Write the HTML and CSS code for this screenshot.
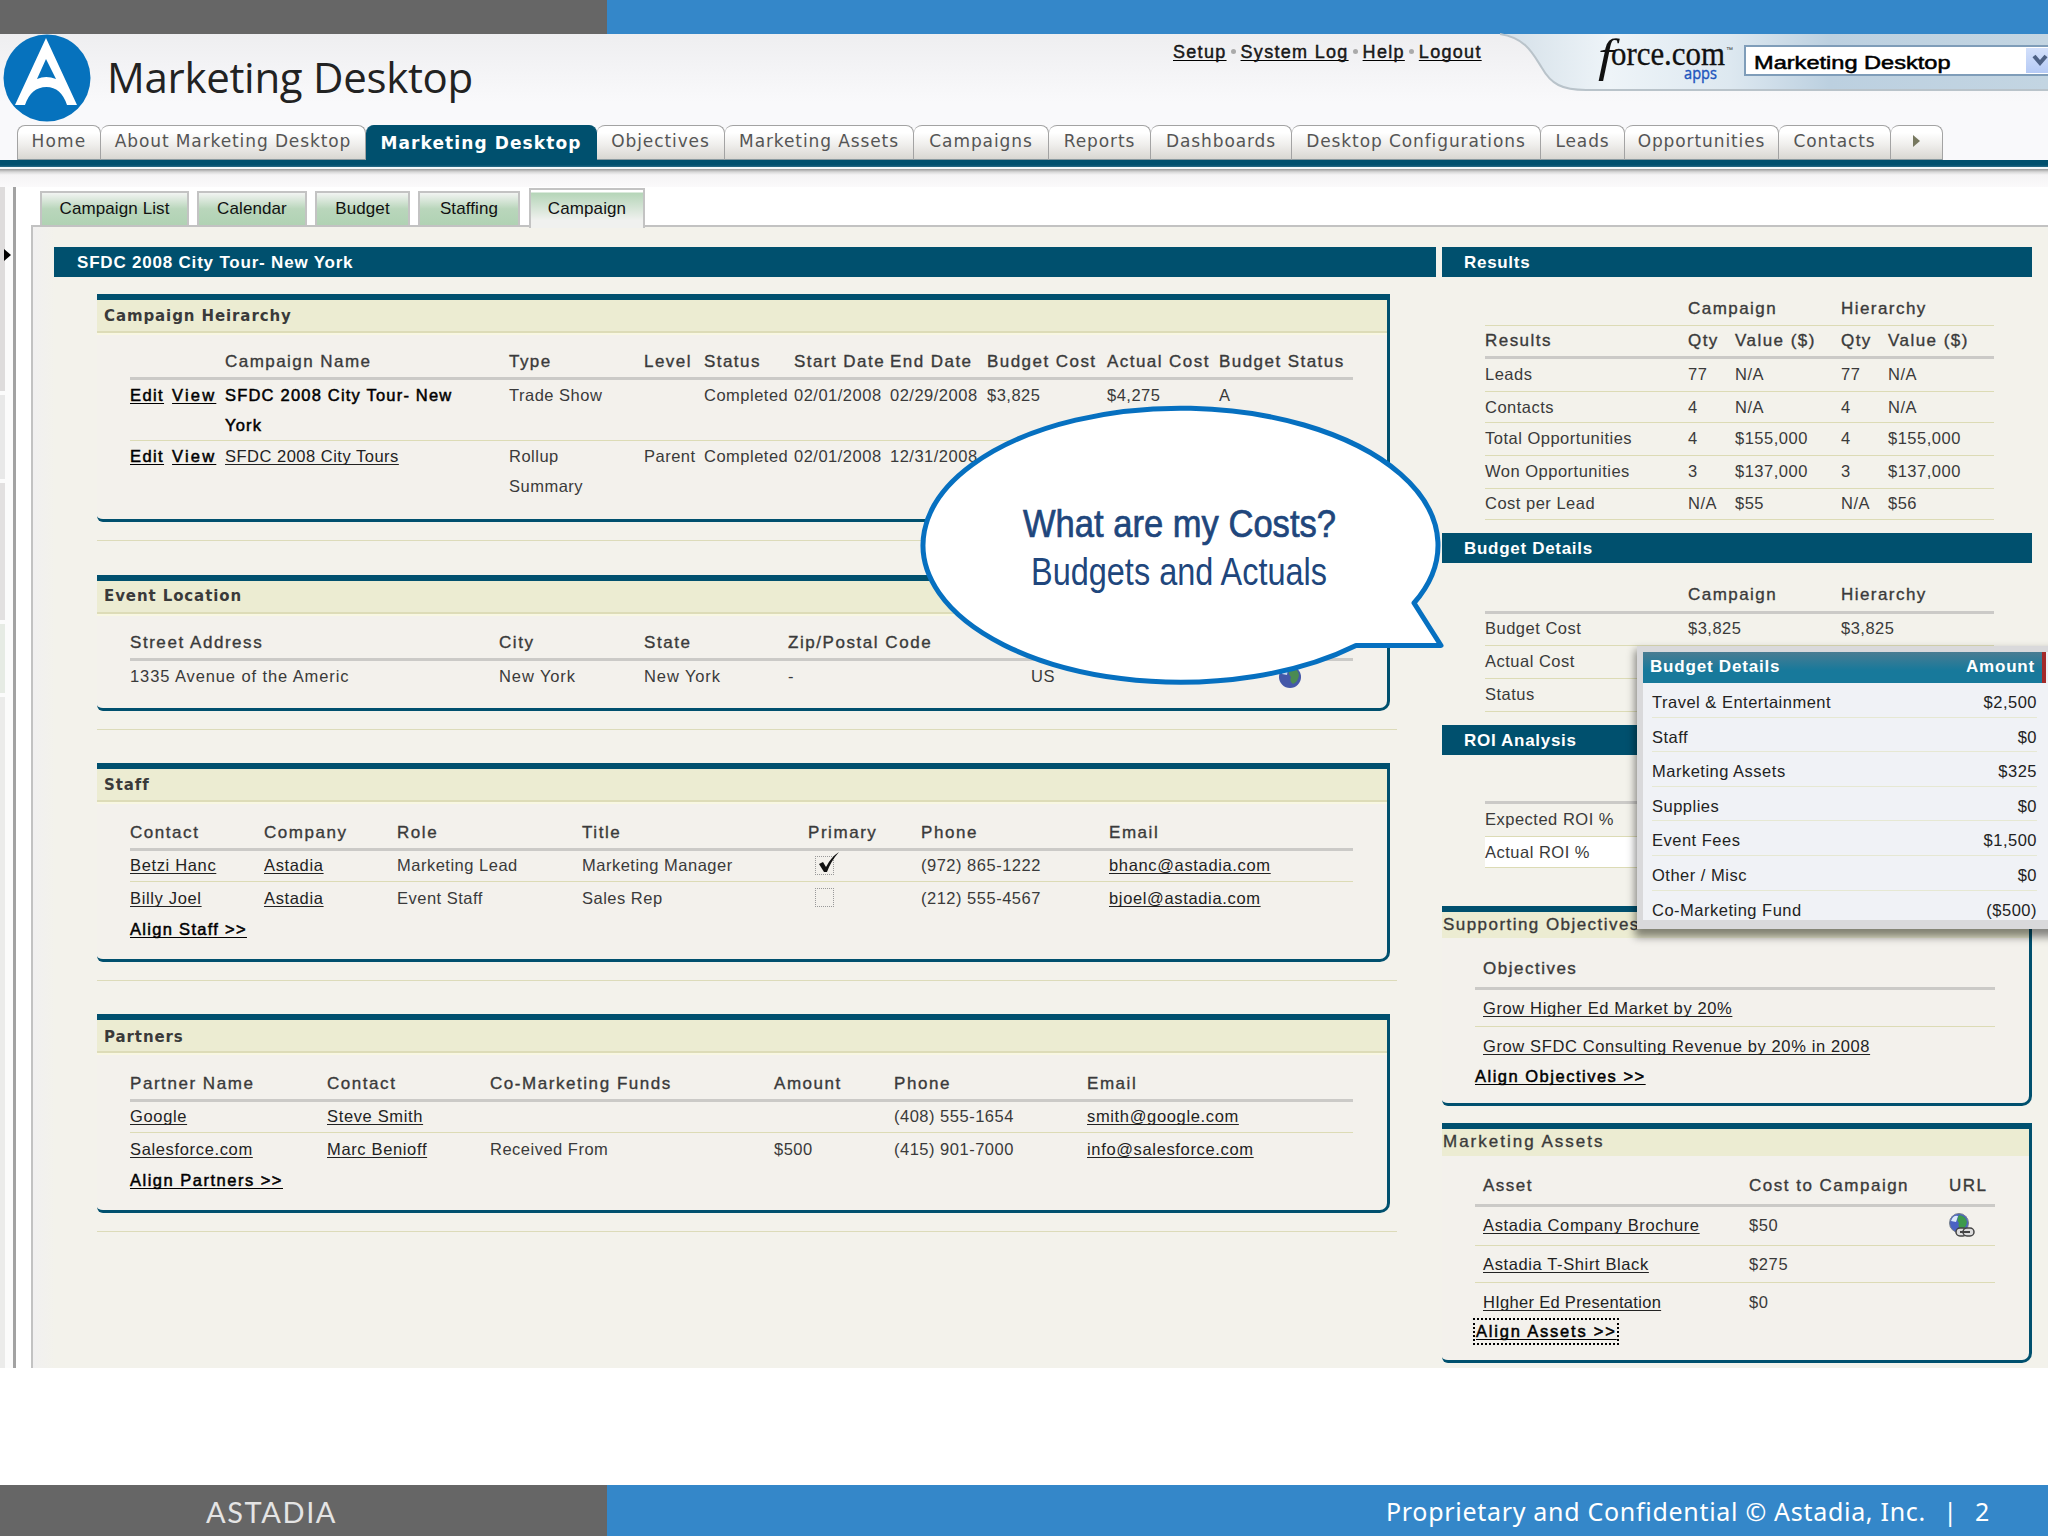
FILE: index.html
```
<!DOCTYPE html>
<html lang="en">
<head>
  <meta charset="UTF-8">
  <meta name="viewport" content="width=device-width, initial-scale=1.0">
  <title>Marketing Desktop</title>
  <link rel="stylesheet" href="styles.css">
</head>
<body>
  <div id="slide">
    <div class="strip top-strip"><div class="strip-gray"></div></div>

    <div id="app">
      <header class="header">
        <svg class="logo" width="88" height="88" viewBox="0 0 88 88">
          <ellipse cx="44" cy="44" rx="43.5" ry="43.5" fill="#0672bd"/>
          <path d="M43 4 L74 71 L64 71 Q58 53 43.5 53 Q28 53 22 71 L12 71 Z M43 25 L34 45 Q43 41 53 45 Z" fill="#fff" fill-rule="evenodd"/>
        </svg>
        <h1 class="app-title">Marketing Desktop</h1>
        <nav class="links">
          <a>Setup</a><i></i><a>System Log</a><i></i><a>Help</a><i></i><a>Logout</a>
        </nav>
        <svg class="force" width="548" height="60" viewBox="0 0 548 60">
          <defs>
            <linearGradient id="sky" x1="0" y1="0" x2="1" y2="0">
              <stop offset="0" stop-color="#d3dfe8"/>
              <stop offset=".2" stop-color="#eef4f8"/>
              <stop offset=".42" stop-color="#dde8f0"/>
              <stop offset=".6" stop-color="#bcd0e0"/>
              <stop offset="1" stop-color="#c3d5e2"/>
            </linearGradient>
          </defs>
          <path d="M0 0 C26 4 33 20 42 34 C51 50 62 56 86 56 L548 56 L548 0 Z" fill="url(#sky)"/>
          <path d="M0 0 C26 4 33 20 42 34 C51 50 62 56 86 56 L548 56" fill="none" stroke="#b9c3ca" stroke-width="2"/>
          <text class="force-f" x="98" y="36.5" textLength="15.4" lengthAdjust="spacingAndGlyphs">f</text>
          <text class="force-text" x="111" y="30.5" textLength="114" lengthAdjust="spacingAndGlyphs">orce.com</text>
          <text class="force-tm" x="226" y="18">™</text>
          <text class="force-apps" x="184" y="45" textLength="33" lengthAdjust="spacingAndGlyphs">apps</text>
        </svg>
        <div class="select">
          <span>Marketing Desktop</span>
          <div class="select-btn"><svg width="24" height="24" viewBox="0 0 24 24"><path d="M8 8 L14 15 L20 8" fill="none" stroke="#4d6185" stroke-width="4"/></svg></div>
        </div>
      </header>

      <ul class="tabs">
        <li class="t-home">Home</li>
        <li class="t-about">About Marketing Desktop</li>
        <li class="t-desk active">Marketing Desktop</li>
        <li class="t-obj">Objectives</li>
        <li class="t-assets">Marketing Assets</li>
        <li class="t-camp">Campaigns</li>
        <li class="t-rep">Reports</li>
        <li class="t-dash">Dashboards</li>
        <li class="t-conf">Desktop Configurations</li>
        <li class="t-leads">Leads</li>
        <li class="t-opp">Opportunities</li>
        <li class="t-cont">Contacts</li>
        <li class="t-more"><b></b></li>
      </ul>
      <div class="tab-line"></div>

      <div class="workspace">
        <aside class="sidebar">
          <div class="seg seg1"><b></b></div>
          <div class="seg seg2"></div>
          <div class="seg seg3"></div>
          <div class="seg seg4"></div>
          <div class="seg seg5"></div>
        </aside>
        <div class="content">
          <ul class="subtabs">
            <li class="s-list">Campaign List</li>
            <li class="s-cal">Calendar</li>
            <li class="s-bud">Budget</li>
            <li class="s-staff">Staffing</li>
            <li class="s-camp current">Campaign</li>
          </ul>

          <main class="panel">
            <div class="left">
              <h2 class="bar">SFDC 2008 City Tour- New York</h2>

              <div class="block">
                <section class="box hierarchy">
                  <h3>Campaign Heirarchy</h3>
                  <div class="row head"><div></div><div>Campaign Name</div><div>Type</div><div>Level</div><div>Status</div><div>Start Date</div><div>End Date</div><div>Budget Cost</div><div>Actual Cost</div><div>Budget Status</div></div>
                  <div class="row two"><div class="acts"><a>Edit</a><a>View</a></div><div class="strong">SFDC 2008 City Tour- New York</div><div>Trade Show</div><div></div><div>Completed</div><div>02/01/2008</div><div>02/29/2008</div><div>$3,825</div><div>$4,275</div><div>A</div></div>
                  <div class="row two last"><div class="acts"><a>Edit</a><a>View</a></div><div><a>SFDC 2008 City Tours</a></div><div>Rollup<br>Summary</div><div>Parent</div><div>Completed</div><div>02/01/2008</div><div>12/31/2008</div><div></div><div></div><div></div></div>
                </section>
              </div>

              <div class="block">
                <section class="box location">
                  <h3>Event Location</h3>
                  <div class="row head"><div>Street Address</div><div>City</div><div>State</div><div>Zip/Postal Code</div><div></div><div></div></div>
                  <div class="row last"><div class="wide">1335 Avenue of the Americ</div><div class="wide">New York</div><div class="wide">New York</div><div>-</div><div>US</div>
                    <div><svg class="globe" width="26" height="26" viewBox="0 0 26 26"><circle cx="12" cy="12" r="11" fill="#4458a8"/><path d="M12 3 Q20 3 21 10 Q20 17 15 19 Q11 16 13 12 Q9 9 12 3Z" fill="#4b8a52"/><path d="M4 9 Q6 4 10 4 L9 10 Z" fill="#c5d6ee"/></svg></div></div>
                </section>
              </div>

              <div class="block">
                <section class="box staff">
                  <h3>Staff</h3>
                  <div class="row head"><div>Contact</div><div>Company</div><div>Role</div><div>Title</div><div>Primary</div><div>Phone</div><div>Email</div></div>
                  <div class="row"><div><a>Betzi Hanc</a></div><div><a>Astadia</a></div><div>Marketing Lead</div><div>Marketing Manager</div>
                    <div><span class="check"><svg width="24" height="24" viewBox="0 0 24 24"><path d="M2 12 L6 10 L9 15 Q14 5 22 0 Q14 9 10 20 L7 20 Z" fill="#111"/></svg></span></div><div>(972) 865-1222</div><div><a>bhanc@astadia.com</a></div></div>
                  <div class="row last"><div><a>Billy Joel</a></div><div><a>Astadia</a></div><div>Event Staff</div><div>Sales Rep</div><div><span class="check"></span></div><div>(212) 555-4567</div><div><a>bjoel@astadia.com</a></div></div>
                  <a class="align">Align Staff &gt;&gt;</a>
                </section>
              </div>

              <div class="block">
                <section class="box partners">
                  <h3>Partners</h3>
                  <div class="row head"><div>Partner Name</div><div>Contact</div><div>Co-Marketing Funds</div><div>Amount</div><div>Phone</div><div>Email</div></div>
                  <div class="row"><div><a>Google</a></div><div><a>Steve Smith</a></div><div></div><div></div><div>(408) 555-1654</div><div><a>smith@google.com</a></div></div>
                  <div class="row last"><div><a>Salesforce.com</a></div><div><a>Marc Benioff</a></div><div>Received From</div><div>$500</div><div>(415) 901-7000</div><div><a>info@salesforce.com</a></div></div>
                  <a class="align">Align Partners &gt;&gt;</a>
                </section>
              </div>
            </div>

            <div class="right">
              <h2 class="bar">Results</h2>
              <div class="sheet results">
                <div class="row head top"><div></div><div>Campaign</div><div></div><div>Hierarchy</div><div></div></div>
                <div class="row head"><div>Results</div><div>Qty</div><div>Value ($)</div><div>Qty</div><div>Value ($)</div></div>
                <div class="row"><div>Leads</div><div>77</div><div>N/A</div><div>77</div><div>N/A</div></div>
                <div class="row short"><div>Contacts</div><div>4</div><div>N/A</div><div>4</div><div>N/A</div></div>
                <div class="row"><div>Total Opportunities</div><div>4</div><div>$155,000</div><div>4</div><div>$155,000</div></div>
                <div class="row"><div>Won Opportunities</div><div>3</div><div>$137,000</div><div>3</div><div>$137,000</div></div>
                <div class="row short"><div>Cost per Lead</div><div>N/A</div><div>$55</div><div>N/A</div><div>$56</div></div>
              </div>

              <h2 class="bar">Budget Details</h2>
              <div class="sheet budget">
                <div class="row head"><div></div><div>Campaign</div><div>Hierarchy</div></div>
                <div class="row mid"><div>Budget Cost</div><div>$3,825</div><div>$3,825</div></div>
                <div class="row"><div>Actual Cost</div><div></div><div></div></div>
                <div class="row"><div>Status</div><div></div><div></div></div>
              </div>

              <h2 class="bar">ROI Analysis</h2>
              <div class="sheet roi">
                <div class="row head"></div>
                <div class="row"><div>Expected ROI %</div></div>
                <div class="row short white"><div>Actual ROI %</div></div>
              </div>

              <section class="box side objectives">
                <h3>Supporting Objectives</h3>
                <div class="row head"><div>Objectives</div></div>
                <div class="row"><div><a>Grow Higher Ed Market by 20%</a></div></div>
                <div class="row last"><div><a>Grow SFDC Consulting Revenue by 20% in 2008</a></div></div>
                <a class="align">Align Objectives &gt;&gt;</a>
              </section>

              <section class="box side assets">
                <h3>Marketing Assets</h3>
                <div class="row head"><div>Asset</div><div>Cost to Campaign</div><div>URL</div></div>
                <div class="row first"><div><a>Astadia Company Brochure</a></div><div>$50</div>
                  <div><svg class="globe" width="26" height="26" viewBox="0 0 26 26"><circle cx="10" cy="10" r="9.5" fill="#4a62c4" stroke="#77808c"/><path d="M10 2 Q17 3 18 9 Q17 15 13 16 Q8 14 10 10 Q7 7 10 2Z" fill="#3e9a4c"/><path d="M2 8 Q4 2 9 3 L7 9 Z" fill="#dbe9fb"/><rect x="7" y="15" width="11" height="8" rx="4" fill="#ddd" stroke="#444" stroke-width="1.5"/><rect x="14" y="15" width="11" height="8" rx="4" fill="#ddd" stroke="#444" stroke-width="1.5"/><path d="M11 19 H21" stroke="#444" stroke-width="2"/></svg></div></div>
                <div class="row"><div><a>Astadia T-Shirt Black</a></div><div>$275</div><div></div></div>
                <div class="row last"><div><a>HIgher Ed Presentation</a></div><div>$0</div><div></div></div>
                <a class="align focus">Align Assets &gt;&gt;</a>
              </section>
            </div>
          </main>
        </div>
      </div>
    </div>

    <footer class="strip bottom-strip">
      <div class="strip-gray">ASTADIA</div>
      <div class="foot-text"><span>Proprietary and Confidential © Astadia, Inc.</span><span>|</span><span>2</span></div>
    </footer>

    <!-- budget details popup -->
    <div class="popup">
      <div class="popup-head"><span>Budget Details</span><span>Amount</span></div>
      <div class="popup-row"><span>Travel &amp; Entertainment</span><span>$2,500</span></div>
      <div class="popup-row"><span>Staff</span><span>$0</span></div>
      <div class="popup-row"><span>Marketing Assets</span><span>$325</span></div>
      <div class="popup-row"><span>Supplies</span><span>$0</span></div>
      <div class="popup-row"><span>Event Fees</span><span>$1,500</span></div>
      <div class="popup-row"><span>Other / Misc</span><span>$0</span></div>
      <div class="popup-row"><span>Co-Marketing Fund</span><span>($500)</span></div>
    </div>

    <!-- callout -->
    <svg class="callout" width="530" height="290" viewBox="915 400 530 290">
      <path d="M1414 603 L1441 645.5 L1356 645.5 A257.5 137 0 1 1 1414 603 Z" fill="#fff" stroke="#0670c0" stroke-width="5" stroke-linejoin="round"/>
      <text class="q" x="1023" y="537" textLength="313" lengthAdjust="spacingAndGlyphs">What are my Costs?</text>
      <text x="1031" y="585" textLength="296" lengthAdjust="spacingAndGlyphs">Budgets and Actuals</text>
    </svg>
  </div>
</body>
</html>
```
FILE: styles.css
```
* {margin: 0; padding: 0; box-sizing: border-box;}
ul {list-style-type: none;}
body {
  background-color: #fff;
  font-family: "Liberation Sans", Arial, sans-serif;
  font-size: 16.5px;
  letter-spacing: 0.5px;
  color: #3a3a3a;
}
#slide {
  position: relative;
  width: 2048px;
  height: 1536px;
  overflow: hidden;
  display: flex;
  flex-direction: column;
}
.strip {
  display: flex;
  background-color: #3487c9;
}
.strip-gray {
  width: 607px;
  background-color: #666;
}
.top-strip {height: 34px;}
#app {
  height: 1334px;
  display: flex;
  flex-direction: column;
}

/* header */
.header {
  position: relative;
  height: 91px;
  display: flex;
  background: linear-gradient(#eeeef0, #f9f9fb 75%);
}
.logo {margin-left: 3px; flex: none;}
.app-title {
  margin-left: 16px;
  width: 1066px;
  font: 400 42px/86px "Open Sans", "Noto Sans", sans-serif;
  letter-spacing: -0.3px;
  color: #222;
}
.links {
  display: flex;
  height: 36px;
  line-height: 36px;
  font-size: 18px;
  letter-spacing: 1.3px;
  color: #000;
  -webkit-text-stroke: 0.4px #000;
}
.links i {
  width: 5px;
  height: 5px;
  margin: 15px 5px 0 4px;
  border-radius: 50%;
  background-color: #aaa;
}
a {
  color: #222;
  text-decoration: underline;
  text-decoration-thickness: 1.4px;
  text-underline-offset: 2px;
  text-decoration-skip-ink: none;
}
.force {
  position: absolute;
  left: 1500px;
  top: 0;
  overflow: visible;
}
.force text {letter-spacing: 0;}
.force-f {font: italic 46px "Liberation Serif", serif; fill: #111;}
.force-text {font: 34px "Liberation Serif", serif; fill: #111; stroke: #111; stroke-width: 0.3;}
.force-tm {font: 7px "Liberation Sans", sans-serif; fill: #333;}
.force-apps {font: 17px "Open Sans", sans-serif; fill: #1d55bd; stroke: #1d55bd; stroke-width: 0.4;}
.select {
  position: absolute;
  left: 1744px;
  top: 11px;
  width: 320px;
  height: 31px;
  display: flex;
  border: 2px solid #7f9db9;
  background-color: #fff;
  overflow: hidden;
}
.select span {
  width: 280px;
  padding-left: 8px;
  font-size: 18px;
  line-height: 33px;
  letter-spacing: 0;
  white-space: nowrap;
  color: #000;
  -webkit-text-stroke: 0.5px #000;
  transform: scaleX(1.31);
  transform-origin: 8px 0;
}
.select-btn {
  width: 26px;
  height: 25px;
  margin-top: 1px;
  background: linear-gradient(#d3e0fb, #b5caf5);
  position: relative;
  z-index: 1;
  flex: none;
}

/* main tabs */
.tabs {
  display: flex;
  height: 35px;
  padding-left: 17px;
  background-color: #f9f9fb;
}
.tabs li {
  border: 1.5px solid #a3a3a3;
  border-left-width: 0;
  border-bottom-color: #8a9aa0;
  border-radius: 8px 8px 0 0;
  background: linear-gradient(#fff 20%, #f0efed 55%, #d9d7d2);
  font: 17px/31px "DejaVu Sans", sans-serif;
  letter-spacing: 0.9px;
  text-align: center;
  white-space: nowrap;
  color: #555;
}
.tabs .active {
  border-color: #00506e;
  background: #00506e;
  color: #fff;
  font-weight: bold;
  line-height: 34px;
  letter-spacing: 1.1px;
}
.tabs .t-home {width: 84px; border-left-width: 1.5px; letter-spacing: 1.2px;}
.t-about {width: 265px;}
.t-desk {width: 231px;}
.t-obj {width: 128px;}
.t-assets {width: 189px;}
.t-camp {width: 135px;}
.t-rep {width: 102px;}
.t-dash {width: 141px;}
.t-conf {width: 249px;}
.t-leads {width: 84px;}
.t-opp {width: 154px;}
.t-cont {width: 112px;}
.t-more {width: 52px;}
.t-more b {
  display: inline-block;
  border: 6px solid transparent;
  border-left: 7px solid #77785f;
  border-right: 0;
}
.tab-line {
  height: 27px;
  background: linear-gradient(#00506e 0 5px, #2c6d88 7px, #f4f8fa 7px 9px, #9a9a9a 9px, #d8d8d8 12px, #f5f4f5 15px, #fbfafb 27px);
}

/* workspace */
.workspace {
  height: 1181px;
  display: flex;
}
.sidebar {
  width: 16px;
  border-right: 3px solid #a2a2a2;
  background-color: #fbfbfb;
}
.seg {
  width: 5px;
  margin-bottom: 4px;
  background-color: #dedcdc;
}
.seg1 {height: 204px; padding-top: 62px;}
.seg1 b {
  display: block;
  width: 0;
  margin-left: 4px;
  border: 6px solid transparent;
  border-left: 7px solid #000;
  border-right: 0;
}
.seg2 {height: 84px; background-color: #e8e8e8;}
.seg3 {height: 137px; background-color: #e2e0e0;}
.seg4 {height: 69px; background-color: #e6ebe4;}
.seg5 {height: 671px; margin-bottom: 0; background-color: #ebebea;}
.content {
  width: 2017px;
  margin-left: 15px;
}
.subtabs {
  display: flex;
  align-items: flex-end;
  height: 38px;
  padding-left: 9px;
}
.subtabs li {
  height: 34px;
  margin-right: 8px;
  border: 2px solid #c3c3c3;
  border-bottom: 0;
  background: linear-gradient(#f2f4f2, #b9d6bb 50%, #b0d2b3);
  font-size: 17px;
  line-height: 31px;
  letter-spacing: 0.1px;
  text-align: center;
  color: #111;
}
.subtabs .s-list {width: 149px;}
.subtabs .s-cal {width: 110px;}
.subtabs .s-bud {width: 95px;}
.subtabs .s-staff {width: 102px; margin-right: 9px;}
.subtabs .current {
  position: relative;
  z-index: 1;
  width: 116px;
  height: 40px;
  margin-bottom: -3px;
  line-height: 37px;
  background: linear-gradient(#fff 2px, #b5d5b8 3px, #f0f1ef 80%);
}

.panel {
  height: 1143px;
  display: flex;
  gap: 6px;
  padding: 20px 0 0 21px;
  border-top: 2px solid #c2c2c2;
  border-left: 2px solid #c2c2c2;
  background: linear-gradient(90deg, #f1f0f0, #f3f2eb 22px);
}
.left {width: 1382px;}
.right {width: 590px;}
.bar {
  height: 30px;
  padding-left: 22px;
  background-color: #00506e;
  color: #fff;
  font-size: 17px;
  line-height: 32px;
  letter-spacing: 0.7px;
}
.left .bar {padding-left: 23px; letter-spacing: 0.8px;}

/* boxes */
.block {
  width: 1300px;
  margin: 0 0 33px 43px;
  padding-bottom: 18px;
  border-bottom: 1px solid #dcdbb9;
}
.bar + .block {margin-top: 17px; margin-bottom: 34px;}
.box {
  width: 1293px;
  border: 3px solid #00506e;
  border-top-width: 6px;
  border-left-width: 0;
  border-radius: 0 0 10px 6px;
  background-color: #f3f1ec;
}
.box h3 {
  height: 35px;
  padding-left: 7px;
  border-bottom: 2px solid #f8f7e2;
  background: linear-gradient(#ececd2 31px, #dddcb8 31px 33px);
  font: bold 15px/33px "DejaVu Sans", sans-serif;
  letter-spacing: 0.9px;
}
.hierarchy {height: 228px;}
.location {height: 136px;}
.box.location h3 {line-height: 31px;}
.staff, .partners {height: 199px;}
.partners h3 {padding-top: 1px;}
.row {
  display: grid;
  white-space: nowrap;
  border-bottom: 1px solid #dcdbb5;
}
.box .row {
  width: 1223px;
  margin-left: 33px;
  height: 31px;
  line-height: 29px;
}
.box .row.last {border-bottom: 0;}
.box .head {
  height: 45px;
  padding-top: 12px;
  line-height: 30px;
}
.row.head {
  border-bottom: 3px solid #cbcac7;
  font-size: 17px;
  letter-spacing: 1.55px;
  -webkit-text-stroke: 0.35px #3a3a3a;
}
.staff .head, .partners .head {height: 47px; padding-top: 14px;}
.hierarchy .row {grid-template-columns: 95px 284px 135px 60px 90px 96px 97px 120px 112px 1fr;}
.location .row {grid-template-columns: 369px 145px 144px 243px 247px 1fr;}
.staff .row {grid-template-columns: 134px 133px 185px 226px 113px 188px 1fr;}
.partners .row {grid-template-columns: 197px 163px 284px 120px 193px 1fr;}
.hierarchy .two {
  height: 61px;
  padding-top: 1px;
  line-height: 29.5px;
}
.hierarchy .head {letter-spacing: 1.45px;}
.location .last {padding-top: 1px;}
.wide {letter-spacing: 0.9px;}
.staff .last, .partners .last {padding-top: 2px; height: 33px;}
.strong {
  width: 240px;
  white-space: normal;
  letter-spacing: 1.2px;
}
.acts a, .strong, .align {
  color: #000;
  -webkit-text-stroke: 0.5px #000;
}
.left .row a {letter-spacing: 0.65px;}
.left .acts a:first-child {margin-right: 8px; letter-spacing: 1.4px;}
.left .acts a:last-child {letter-spacing: 2.2px;}
.left .two a {letter-spacing: 0.5px;}
.align {
  display: inline-block;
  margin-left: 33px;
  line-height: 28px;
  letter-spacing: 1.5px;
}
.staff .align {letter-spacing: 1.3px;}
.globe {display: block; margin-top: 3px;}
.check {
  display: block;
  width: 19px;
  height: 19px;
  margin: 5px 0 0 7px;
  border: 1px dotted #999;
}
.last .check {margin-top: 4px;}
.check svg {display: block; margin: -5px 0 0 1px; overflow: visible;}

/* right column */
.sheet {
  width: 509px;
  margin: 0 0 13px 43px;
}
.sheet .row {
  height: 33px;
  padding-top: 1px;
  line-height: 29px;
  letter-spacing: 0.5px;
}
.sheet .head {padding-top: 0; letter-spacing: 1.45px; line-height: 29px;}
.results .row {grid-template-columns: 203px 47px 106px 47px 1fr;}
.budget .row {grid-template-columns: 203px 153px 1fr;}
.sheet .top {
  height: 49px;
  padding-top: 17px;
  border-bottom: 1px solid #dcdbb5;
  line-height: 30px;
}
.sheet .short {height: 31px; line-height: 29px;}
.results .short:last-child {line-height: 27px;}
.sheet .mid {height: 32px; padding-top: 0;}
.budget .head {height: 51px; padding-top: 17px; line-height: 30px;}
.roi .head {height: 49px;}
.sheet .white {background: linear-gradient(#fff, #fff) no-repeat 0 0 / 152px 100%;}
.roi {margin-bottom: 38px;}
.side {width: 590px;}
.side h3, .box.side h3 {
  height: 26px;
  padding-left: 1px;
  border: 0;
  background: #ececd2;
  font: 17px/26px "Liberation Sans", sans-serif;
  letter-spacing: 1.45px;
  -webkit-text-stroke: 0.35px #3a3a3a;
}
.side .row {
  width: 520px;
  height: 37px;
  padding-left: 8px;
  line-height: 36px;
  letter-spacing: 0.62px;
}
.side .last {padding-top: 1px;}
.side .head {height: 52px; padding-top: 13px; letter-spacing: 1.5px;}
.side .align {line-height: 24px;}
.objectives {height: 200px; margin-bottom: 17px;}
.assets {height: 240px;}
.box.assets h3 {height: 27px; letter-spacing: 2px;}
.assets .row {grid-template-columns: 266px 200px 1fr;}
.assets .head {height: 51px; padding-top: 12px;}
.assets .first {height: 39px;}
.assets .last a {letter-spacing: 0.3px;}
.assets .globe {margin-top: 6px;}
.assets .focus {
  height: 27px;
  margin: -2px 0 0 31px;
  padding: 0 0 0 1px;
  border: 2px dotted #000;
  line-height: 23px;
  letter-spacing: 1.8px;
}

/* popup */
.popup {
  position: absolute;
  left: 1637px;
  top: 646px;
  width: 420px;
  height: 283px;
  padding: 0 14px 0 0;
  border: 6px solid #d9d9db;
  border-bottom-width: 9px;
  background-color: #f0f2f6;
  box-shadow: 0 6px 8px 2px rgba(0, 0, 0, 0.45);
  color: #222;
}
.popup-head, .popup-row {
  display: flex;
  justify-content: space-between;
}
.popup-head {
  width: 403px;
  height: 31px;
  padding: 0 7px 0 7px;
  border-right: 4px solid #a32a2a;
  background: linear-gradient(#497c92, #17799b 60%);
  color: #fff;
  font-weight: bold;
  font-size: 17px;
  line-height: 29px;
  letter-spacing: 0.8px;
}
.popup-row {
  height: 34.6px;
  margin-left: 9px;
  width: 385px;
  border-bottom: 1px solid #e6e8d3;
  line-height: 38px;
}
.popup-row:last-child {border: 0;}

/* callout */
.callout {
  position: absolute;
  left: 915px;
  top: 400px;
}
.callout text {
  font: 38px "Liberation Sans", sans-serif;
  letter-spacing: 0;
  fill: #20467c;
}
.callout .q {stroke: #20467c; stroke-width: 0.7;}

/* footer */
.bottom-strip {
  height: 51px;
  margin-top: 117px;
}
.bottom-strip .strip-gray {
  padding-left: 206px;
  font: 29px/53px Lato, sans-serif;
  letter-spacing: 1.6px;
  color: #e4e4e4;
}
.foot-text {
  display: flex;
  justify-content: space-between;
  width: 604px;
  margin-left: 779px;
  font: 25px/53px "Noto Sans", sans-serif;
  letter-spacing: 0.7px;
  color: #fff;
  white-space: nowrap;
}
```
